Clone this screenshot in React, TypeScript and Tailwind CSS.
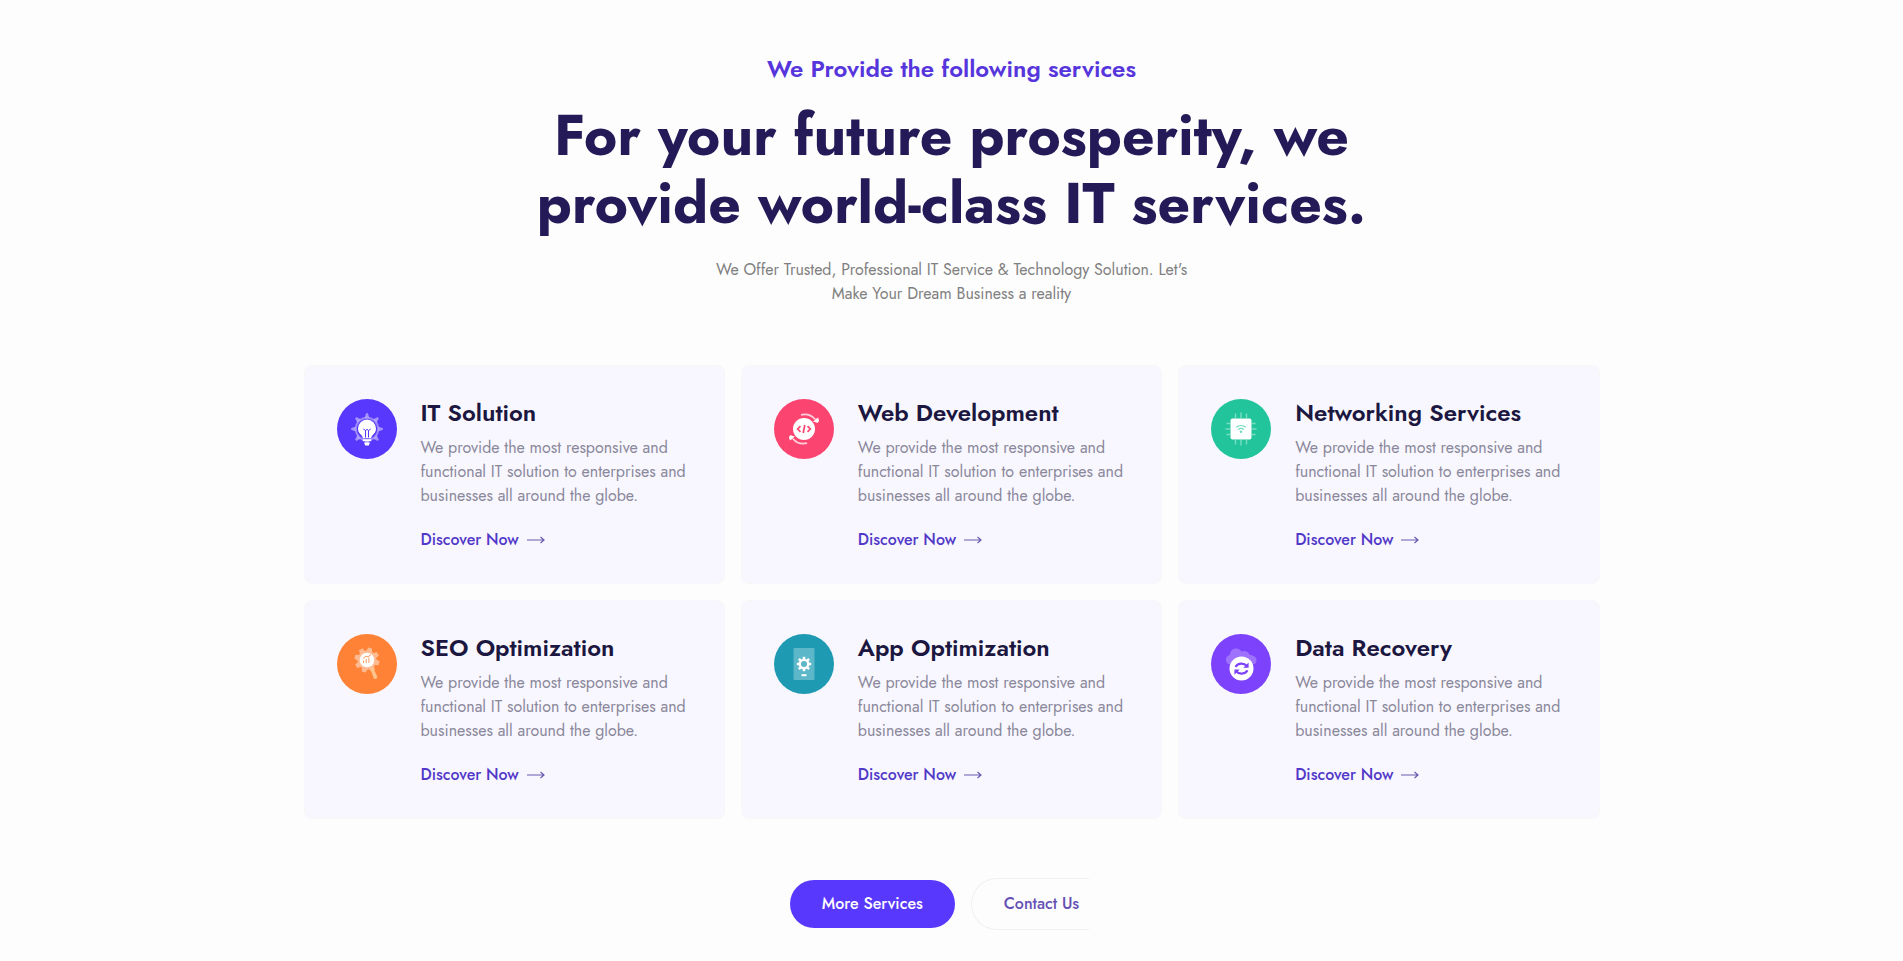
import type { ReactNode } from "react";

type Service = { title: string; color: string; icon: ReactNode };

const gearTeeth = [0, 45, 90, 135, 180, 225, 270, 315];

function BulbIcon() {
  return (
    <svg viewBox="0 0 36 36" className="size-9" aria-hidden="true">
      <g fill="#fff" opacity="0.45">
        {gearTeeth.map((a) => (
          <path key={a} d="M15.8 6.5 17 2.2h2l1.2 4.3z" transform={`rotate(${a} 18 18)`} />
        ))}
      </g>
      <circle cx="18" cy="18" r="11.2" fill="none" stroke="#fff" strokeWidth="2" opacity="0.4" />
      <path d="M18 8.500a9 9 0 0 0-9 9c0 3.200 1.700 5 3.200 6.600.9.9 1.500 1.900 1.600 3.200h8.400c.1-1.300.7-2.300 1.600-3.200 1.500-1.600 3.200-3.400 3.200-6.600a9 9 0 0 0-9-9z" fill="#fff" />
      <path d="m14.300 18 2.200 1.500v7M21.700 18l-2.200 1.500v7M16.500 19.500 18 18.300l1.500 1.200" fill="none" stroke="#5838fc" strokeWidth="1" />
      <path d="M13.800 28.300h8.400v2h-8.400zM15 31.400h6l-1.200 3h-3.600z" fill="#fff" />
    </svg>
  );
}

function CodeIcon() {
  return (
    <svg viewBox="0 0 36 36" className="size-9" aria-hidden="true">
      <circle cx="18" cy="18" r="11" fill="#fff" />
      <path d="m14.500 15.200-2.800 2.800 2.800 2.800M21.500 15.200l2.800 2.800-2.800 2.800M18.800 14l-1.600 8" fill="none" stroke="#fb4570" strokeWidth="1.700" />
      <g fill="none" stroke="#fff" strokeWidth="1.800" opacity="0.75">
        <path d="M15 3.800c6-1.300 11 .8 14 4.500M21 32.200c-6 1.300-11-.8-14-4.500" />
      </g>
      <path d="m27 10.500 5 1.200.4-5.200zM9 25.500l-5-1.200-.4 5.200z" fill="#fff" />
      <circle cx="31" cy="9.500" r="2" fill="#fff" />
      <circle cx="5" cy="26.500" r="2" fill="#fff" />
    </svg>
  );
}

function ChipIcon() {
  return (
    <svg viewBox="0 0 36 36" className="size-9" aria-hidden="true">
      <g stroke="#fff" strokeWidth="1.400" opacity="0.4" fill="none">
        <path d="M12.500 7V2.500M18 7V1.500M23.500 7V2.500M12.500 29v4.500M18 29v5.500M23.500 29v4.500M7 12.500H3.500M7 18H2.500M7 23.500H3.500M29 12.500h3.500M29 18h4.500M29 23.500h3.500" />
      </g>
      <rect x="7.500" y="7.500" width="21" height="21" rx="2" fill="#fff" />
      <g fill="none" stroke="#22c59b" strokeWidth="1.200" opacity="0.65">
        <path d="M13.300 16.300c2.700-2.400 6.700-2.400 9.400 0M15.300 18.500c1.600-1.400 3.800-1.400 5.400 0" />
      </g>
      <circle cx="18" cy="20.800" r="1.200" fill="#22c59b" opacity="0.65" />
    </svg>
  );
}

function SearchGearIcon() {
  return (
    <svg viewBox="0 0 36 36" className="size-9" aria-hidden="true">
      <g fill="#fff" opacity="0.45">
        {gearTeeth.map((a) => (
          <path key={a} d="M15 6.500 16 2.500h4l1 4z" transform={`rotate(${a + 15} 18 14) translate(0 -1)`} />
        ))}
        <circle cx="18" cy="14" r="9.500" />
      </g>
      <path d="m21 22 2.400-1.500 4.600 9.500c.6 1.300-.1 2.500-1.100 2.900-1 .4-1.800 0-2.300-1z" fill="#ffc48c" />
      <circle cx="18" cy="14" r="7.300" fill="#fff" />
      <path d="M14.500 17v-2.500M17.200 17v-4M19.900 17v-5.500M14 12.500l3-2.300 2 .6 3-2.300" fill="none" stroke="#ff8236" strokeWidth="1" opacity="0.8" />
    </svg>
  );
}

function PhoneGearIcon() {
  return (
    <svg viewBox="0 0 36 36" className="size-9" aria-hidden="true">
      <rect x="7.500" y="2" width="21" height="32" rx="1" fill="#fff" opacity="0.28" />
      <g fill="#fff">
        {gearTeeth.map((a) => (
          <rect key={a} x="16.700" y="10.800" width="2.600" height="3.500" transform={`rotate(${a} 18 18)`} />
        ))}
      </g>
      <circle cx="18" cy="18" r="4.200" fill="none" stroke="#fff" strokeWidth="2.300" />
      <path d="M15.500 28.200h5v2h-5z" fill="#fff" />
    </svg>
  );
}

function CloudSyncIcon() {
  return (
    <svg viewBox="0 0 36 36" className="size-9" aria-hidden="true">
      <path d="M8 18.500c-3.500 0-5-2.500-5-4.800 0-2.600 1.800-4.300 3.800-4.600C7 5.200 9.800 2.500 13 2.500c2.400 0 4.300 1.100 5.400 3 1-.5 2-.7 3-.6 2.900.2 4.700 2 5.200 4.200 4 0 6.900 2.300 6.900 5.300 0 2.500-1.600 4.100-4.600 4.100z" fill="#fff" opacity="0.26" />
      <circle cx="18.500" cy="22.500" r="12" fill="#fff" />
      <g fill="none" stroke="#7d42fb" strokeWidth="2.200">
        <path d="M12.500 20.800c2.500-4 8.500-4.200 11.300-.8M24.500 24.400c-2.500 4-8.500 4.200-11.300.8" />
      </g>
      <path d="M25.600 16.500v5.300h-5.300zM11.400 28.700v-5.300h5.300z" fill="#7d42fb" />
    </svg>
  );
}

const services: Service[] = [
  { title: "IT Solution", color: "bg-[#5838fc]", icon: <BulbIcon /> },
  { title: "Web Development", color: "bg-[#fb4570]", icon: <CodeIcon /> },
  { title: "Networking Services", color: "bg-[#22c59b]", icon: <ChipIcon /> },
  { title: "SEO Optimization", color: "bg-[#ff8236]", icon: <SearchGearIcon /> },
  { title: "App Optimization", color: "bg-[#1e9bb3]", icon: <PhoneGearIcon /> },
  { title: "Data Recovery", color: "bg-[#7d42fb]", icon: <CloudSyncIcon /> },
];

function ServiceCard({ title, color, icon }: Service) {
  return (
    <article className="flex items-start gap-6 rounded-lg border border-[#f7f7f9] bg-[#f8f7ff] px-8 pt-[33px] pb-[31px]">
      <div className={`flex size-15 shrink-0 items-center justify-center rounded-full ${color}`}>
        {icon}
      </div>
      <div className="min-w-0">
        <h3 className="text-2xl leading-7 font-semibold text-[#1c1740]">{title}</h3>
        <p className="mt-[9px] text-base leading-6 text-[#8a889a]">
          We provide the most responsive and functional IT solution to enterprises and businesses all around the globe.
        </p>
        <a href="#" className="mt-5 inline-flex items-center gap-2 text-base leading-6 font-medium text-[#5138c8]">
          Discover Now
          <svg viewBox="0 0 18 8" className="h-2 w-[18px]" fill="none" stroke="#6a5bb0" strokeWidth="1.200" aria-hidden="true">
            <path d="M0 4h17M13.500 1 17 4l-3.500 3" />
          </svg>
        </a>
      </div>
    </article>
  );
}

export default function App() {
  return (
    <main className="min-h-screen bg-[#fdfdfd] px-6 pt-[51px] pb-8 font-['Jost','Lato',sans-serif]">
      <section className="mx-auto max-w-[1296px]">
        <header className="text-center">
          <p className="text-2xl leading-9 font-semibold text-[#5636dc]">We Provide the following services</p>
          <h2 className="mx-auto mt-3.5 max-w-[880px] text-[57px] leading-[68px] font-bold text-[#251a58]">
            For your future prosperity, we provide world-class IT services.
          </h2>
          <p className="mx-auto mt-[21px] max-w-[490px] text-base leading-6 text-[#808080]">
            We Offer Trusted, Professional IT Service &amp; Technology Solution. Let's Make Your Dream Business a reality
          </p>
        </header>
        <div className="mt-[59px] grid gap-4 md:grid-cols-2 lg:grid-cols-3">
          {services.map((s) => (
            <ServiceCard key={s.title} {...s} />
          ))}
        </div>
        <div className="mt-[59px] flex items-center justify-center gap-4">
          <button type="button" className="h-12 rounded-full bg-[#5838fc] px-8 text-base font-medium text-white">
            More Services
          </button>
          <button type="button" className="mr-6 h-[52px] rounded-l-full border border-r-0 border-[#f0f0f0] pr-2.5 pl-8 text-base font-medium text-[#6551b5]">
            Contact Us
          </button>
        </div>
      </section>
    </main>
  );
}
